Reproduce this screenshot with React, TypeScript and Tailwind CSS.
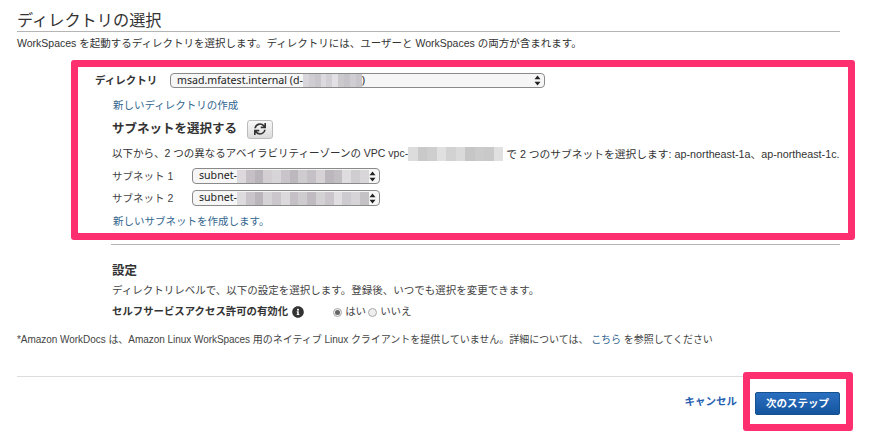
import { FaInfoCircle, FaSync } from "react-icons/fa"

// ── Directory selection step of the WorkSpaces launch wizard ──

const ui = "[font-family:'Liberation_Sans','Noto_Sans_CJK_JP',sans-serif]"

const dirBlur = ["#d8d6da", "#cfcdd1", "#c9c7cb", "#dcdade", "#d2d0d4", "#e2e0e4", "#ccc9cd", "#c6c4c8", "#d0ced2", "#c8c6ca"]
const vpcBlur = ["#dcdcdc", "#c9c9c9", "#cecece", "#e0e0e0", "#d2d2d2", "#dadada", "#c6c6c6", "#cbcbcb", "#c9c9c9", "#e0e0e0"]
const subnet1Blur = ["#dcd8dc", "#c6c0c6", "#b9b3ba", "#d2ced2", "#d8d5d8", "#c8c4c9", "#bdb8be", "#cfccd0", "#c4c0c5", "#d6d2d6", "#bcb7bd", "#c2bec3", "#dedcde", "#d0cdd1", "#d8d6d8"]
const subnet2Blur = ["#dedbde", "#c8c4c9", "#bab5bb", "#d6d3d6", "#cac6cb", "#dcd9dc", "#c4c0c5", "#cfccd0", "#bfbbc0", "#d4d1d5", "#c9c5ca", "#e0dee1", "#cdcad0", "#d6d4d7", "#c4c2c5"]

function Mosaic({ colors, className }: { colors: string[]; className: string }) {
  return (
    <span className={`inline-flex ${className}`}>
      {colors.map((c, i) => (
        <span key={i} className="h-full flex-1" style={{ backgroundColor: c }} />
      ))}
    </span>
  )
}

function Arrows() {
  return (
    <svg width="7" height="11" viewBox="0 0 7 11" className="shrink-0">
      <path d="M3.5 0.5 L6.5 4.2 H0.5 Z M0.5 6.8 H6.5 L3.5 10.5 Z" fill="#222" />
    </svg>
  )
}

function FakeSelect({ className, children }: { className: string; children: React.ReactNode }) {
  return (
    <div
      className={`flex items-center rounded-[4px] border border-[#8a8a8a] bg-[#f6f6f6] pl-[6px] pr-[3px] font-['Noto_Sans',sans-serif] text-[10.6px] text-[#222] ${className}`}
    >
      <div className="flex min-w-0 flex-1 items-center whitespace-nowrap">{children}</div>
      <Arrows />
    </div>
  )
}

function SubnetRow({ label, blur }: { label: string; blur: string[] }) {
  return (
    <div className="flex h-[22px] items-center">
      <span className="w-[80px] pt-[1px] text-[10.5px] text-[#444]">{label}</span>
      <FakeSelect className="h-[16px] w-[188px]">
        subnet-
        <Mosaic colors={blur} className="h-[13px] w-[132px]" />
      </FakeSelect>
    </div>
  )
}

export default function App() {
  return (
    <div className={`h-[436px] w-[870px] overflow-hidden bg-white ${ui} text-[#444]`}>
      <div className="pl-[17px] pr-[30px]">
        <h1 className="h-[32px] border-b border-[#b5b5b5] pt-[9px] text-[16.2px] leading-[22px] text-[#333]">
          ディレクトリの選択
        </h1>
        <p className="mt-[4px] h-[14px] text-[10.5px] leading-[14px] text-[#333]">
          WorkSpaces を起動するディレクトリを選択します。ディレクトリには、ユーザーと WorkSpaces の両方が含まれます。
        </p>
      </div>

      <section className="ml-[71px] mt-[10px] h-[180px] w-[784px] rounded-[3px] border-[7px] border-[#fd2f6e] bg-white">
        <div className="flex h-[26px] items-center pl-[17px] pt-[1px]">
          <span className="w-[75px] text-[10.5px] font-bold text-[#333]">ディレクトリ</span>
          <FakeSelect className="h-[15px] w-[375px]">
            msad.mfatest.internal (d-
            <Mosaic colors={dirBlur} className="h-[13px] w-[59px]" />)
          </FakeSelect>
        </div>
        <a className="ml-[35px] mt-[5px] block h-[14px] text-[10.5px] leading-[14px] text-[#33668f]">
          新しいディレクトリの作成
        </a>
        <div className="ml-[34px] mt-[7px] flex h-[20px] items-center">
          <h2 className="w-[135px] whitespace-nowrap text-[12.5px] font-bold text-[#333]">サブネットを選択する</h2>
          <button className="flex h-[19px] w-[26px] items-center justify-center rounded-[3px] border border-[#bbb] bg-gradient-to-b from-[#f8f8f8] to-[#dcdcdc] text-[#333]">
            <FaSync className="h-[12px] w-[12px]" />
          </button>
        </div>
        <p className="ml-[34px] mt-[8px] flex h-[14px] items-center whitespace-nowrap text-[10.5px] text-[#333]">
          以下から、2 つの異なるアベイラビリティーゾーンの VPC vpc-
          <Mosaic colors={vpcBlur} className="h-[14px] w-[95px]" />
          <span className="ml-[3px] text-[10.75px]">で 2 つのサブネットを選択します: ap-northeast-1a、ap-northeast-1c.</span>
        </p>
        <div className="ml-[34px] mt-[4px]">
          <SubnetRow label="サブネット 1" blur={subnet1Blur} />
          <SubnetRow label="サブネット 2" blur={subnet2Blur} />
        </div>
        <a className="ml-[35px] mt-[5px] block h-[14px] text-[10.5px] leading-[14px] text-[#33668f]">
          新しいサブネットを作成します。
        </a>
      </section>

      <div className="ml-[111px] mr-[30px] mt-[4px] border-t border-[#b5b5b5] pl-[1px]">
        <h3 className="mt-[17px] h-[18px] text-[12.5px] font-bold leading-[18px] text-[#333]">設定</h3>
        <p className="mt-[3px] h-[14px] text-[10.5px] leading-[14px]">
          ディレクトリレベルで、以下の設定を選択します。登録後、いつでも選択を変更できます。
        </p>
        <div className="mt-[7px] flex h-[16px] items-center">
          <span className="text-[10.4px] font-bold text-[#333]">セルフサービスアクセス許可の有効化</span>
          <FaInfoCircle className="ml-[4px] h-[12px] w-[12px] text-[#333]" />
          <span className="ml-[29px] flex h-[9px] w-[9px] items-center justify-center rounded-full border border-[#aaa] bg-[#eee]">
            <span className="h-[5px] w-[5px] rounded-full bg-[#666]" />
          </span>
          <span className="ml-[3px] text-[10.5px]">はい</span>
          <span className="ml-[2px] h-[9px] w-[9px] rounded-full border border-[#aaa] bg-[#eee]" />
          <span className="ml-[3px] text-[10.5px]">いいえ</span>
        </div>
      </div>

      <p className="ml-[17px] mt-[13px] h-[14px] text-[10px] leading-[14px] tracking-[-0.04px]">
        *Amazon WorkDocs は、Amazon Linux WorkSpaces 用のネイティブ Linux クライアントを提供していません。詳細については、
        <a className="text-[#33668f]"> こちら </a>を参照してください
      </p>

      <footer className="ml-[17px] mr-[17px] mt-[29px] flex justify-end border-t border-[#ddd]">
        <div className="flex h-[50px] items-center">
          <a className="mr-[6px] text-[10.5px] font-bold text-[#1f5eb0]">キャンセル</a>
        </div>
        <div className="-mt-[5px] flex h-[59px] w-[110px] items-center rounded-[3px] border-[7px] border-[#fd2f6e] bg-white pl-[5px] pt-[4px]">
          <button className="h-[23px] w-[85px] rounded-[2px] border border-[#15508f] bg-gradient-to-b from-[#2a6fc0] to-[#15559f] text-[10.5px] font-bold text-white">
            次のステップ
          </button>
        </div>
      </footer>
    </div>
  )
}
